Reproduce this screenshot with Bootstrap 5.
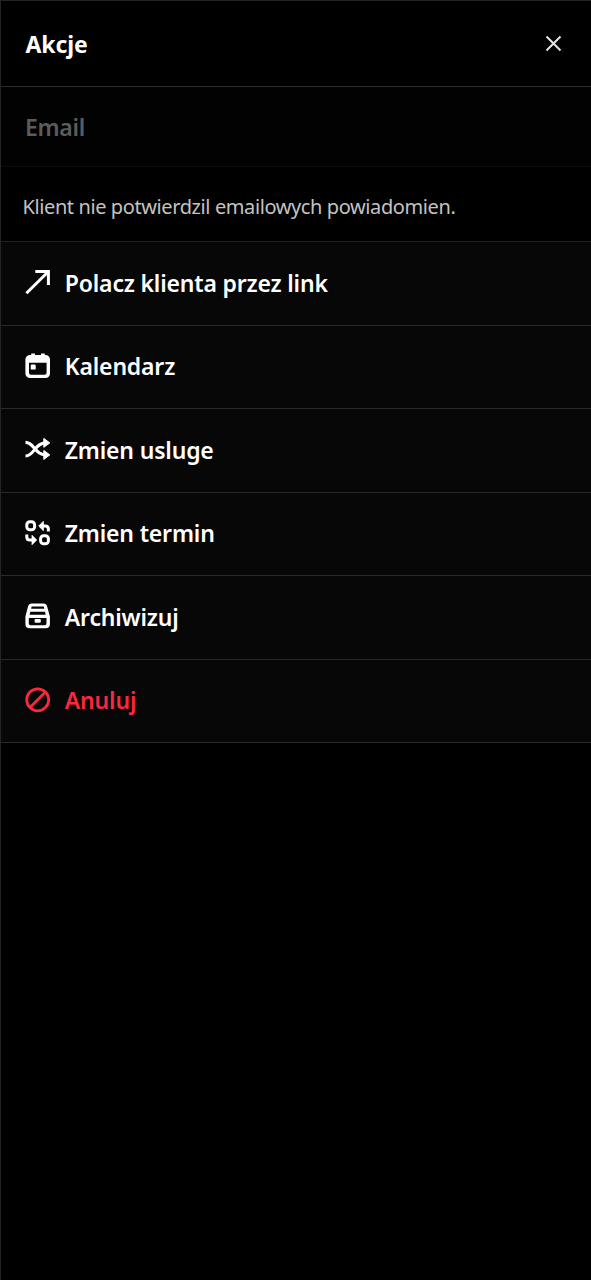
<!DOCTYPE html>
<html lang="pl">
<head>
<meta charset="utf-8">
<meta name="viewport" content="width=device-width, initial-scale=1">
<title>Akcje</title>
<link href="https://cdn.jsdelivr.net/npm/bootstrap@5.3.0/dist/css/bootstrap.min.css" rel="stylesheet">
<style>
body { background: #000; color: #fff; font-family: "Noto Sans", "Open Sans", sans-serif; }
.panel { border-left: 1px solid #242424; border-top: 1px solid #242424; }
.panel-head { height: 86px; padding: 2px 24px 0 24.5px; border-bottom: 1px solid #2b2b2b; }
.panel-title { font-size: 23px; font-weight: 700; letter-spacing: -.1px; padding-top: 1px; }
.close-btn { width: 26px; height: 26px; color: #e4e4e4; margin-top: -1px; }
.section-label { height: 80px; padding: 1px 24px 0; background: #020202; color: #5c5c5c; font-size: 23px; font-weight: 600; letter-spacing: -.3px; border-bottom: 1px solid #0c0c0c; }
.notice { height: 75px; padding: 5px 21.5px 0; color: #c3c3c3; font-size: 20px; letter-spacing: -.4px; border-bottom: 1px solid #202020; }
.action { height: 83.5px; padding: 0 23.5px; gap: 14.3px; background: #070707; color: #fff; font-size: 23px; font-weight: 600; border: 0; border-bottom: 1px solid #292929; letter-spacing: -.18px; }
.action svg { width: 26px; height: 26px; flex: none; margin-top: -2px; }
.action span { margin-top: -1px; }
.action-danger { color: #f9283f; }
</style>
</head>
<body>
<main class="panel min-vh-100">
  <header class="panel-head d-flex align-items-center justify-content-between">
    <h1 class="panel-title m-0"><span>Akcje</span></h1>
    <button class="close-btn btn p-0 border-0 d-flex" aria-label="Zamknij">
      <svg width="26" height="26" viewBox="0 0 26 26" fill="none" stroke="currentColor" stroke-width="2"><path d="M5.500 5.500 19.500 19.500M19.500 5.500 5.500 19.500"/></svg>
    </button>
  </header>
  <div class="section-label d-flex align-items-center"><span>Email</span></div>
  <div class="notice d-flex align-items-center text-nowrap"><span>Klient nie potwierdzil emailowych powiadomien.</span></div>
  <nav class="d-flex flex-column">
    <button class="action d-flex align-items-center text-start">
      <svg viewBox="0 0 26 26" fill="none" stroke="currentColor" stroke-width="3"><path d="M1.4 24.3 23.2 2.800M10.3 2.600H23.400V16"/></svg>
      <span>Polacz klienta przez link</span>
    </button>
    <button class="action d-flex align-items-center text-start">
      <svg viewBox="0 0 26 26" fill="currentColor"><path fill-rule="evenodd" d="M6.200 2V.6H10V2h6V.6h3.800V2h.7a4.500 4.500 0 0 1 4.500 4.500v14a4.500 4.500 0 0 1-4.500 4.500H5.200A4.700 4.500 0 0 1 .4 20.500v-14A4.700 4.500 0 0 1 5.200 2ZM4 9.800v10a2 2 0 0 0 2 2h13.600a2 2 0 0 0 2-2V9.800Z"/><rect x="5.700" y="11.600" width="5" height="5" rx="1.200"/></svg>
      <span>Kalendarz</span>
    </button>
    <button class="action d-flex align-items-center text-start">
      <svg viewBox="0 0 26 26" fill="none" stroke="currentColor" stroke-width="3.100"><path d="M.5 6.400C9.200 6.400 10 18.900 20.700 18.900M.5 20C9.200 20 10 6.700 20.700 6.700"/><path fill="currentColor" stroke-width="1" stroke-linejoin="round" d="M18.800 2.400 24.800 6.900 18.800 11.300ZM18.800 14.400 24.800 18.900 18.800 23.400Z"/></svg>
      <span>Zmien usluge</span>
    </button>
    <button class="action d-flex align-items-center text-start">
      <svg viewBox="0 0 26 26" fill="none" stroke="currentColor" stroke-width="3"><rect x="1.800" y="1.800" width="7.800" height="8" rx="3"/><rect x="15.600" y="15.800" width="7.800" height="8" rx="3"/><path d="M17 6H20.300Q23.400 6 23.400 9.200V11.500M1.800 14.600V17Q1.800 20 4.800 20H8.500"/><path fill="currentColor" stroke-width=".8" stroke-linejoin="round" d="M18.400 1.300V10.700L13.700 6ZM7 15.300V24.700L11.700 20Z"/></svg>
      <span>Zmien termin</span>
    </button>
    <button class="action d-flex align-items-center text-start">
      <svg viewBox="0 0 26 26" fill="currentColor"><path fill-rule="evenodd" d="M7 .6H18.400Q21.600 .6 22.300 4L24.900 13.500V21Q24.900 25.300 20.500 25.300H4.800Q.4 25.300 .4 21V13.500L2.900 4Q3.600 .6 7 .6ZM6.600 3.600 6.100 5.800H19.300L18.800 3.600ZM5.300 8.700 4.600 11.700H20.700L20 8.700ZM3.800 14.900V20.300Q3.800 22.200 5.600 22.200H19.700Q21.500 22.200 21.500 20.300V14.900Z"/><rect x="9.600" y="15.900" width="6.200" height="3.800" rx="1.200"/></svg>
      <span>Archiwizuj</span>
    </button>
    <button class="action action-danger d-flex align-items-center text-start">
      <svg viewBox="0 0 26 26" fill="none" stroke="currentColor" stroke-width="2.800"><circle cx="12.700" cy="12.800" r="11"/><path d="M5 20.500 20.400 5.100"/></svg>
      <span>Anuluj</span>
    </button>
  </nav>
</main>
<script src="https://cdn.jsdelivr.net/npm/bootstrap@5.3.0/dist/js/bootstrap.bundle.min.js"></script>
</body>
</html>
